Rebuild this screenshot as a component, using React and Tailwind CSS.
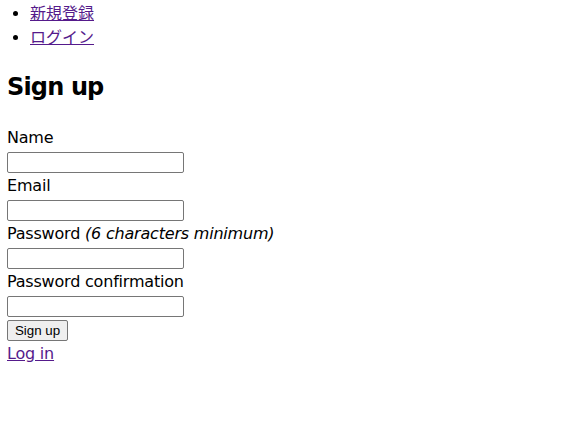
export default function App() {
  const inputCls = "h-[21px] w-[177px] rounded-[2px] border border-[#767676] bg-white";
  return (
    <div className="min-h-[435px] bg-white pl-[7px] pt-[2px] text-[16px] leading-[24px] tracking-[-0.2px] text-black font-['DejaVu_Sans','Noto_Sans_CJK_JP',sans-serif]">
      <ul className="m-0 list-disc pl-[23px] tracking-normal">
        <li><a href="#" className="text-[#551a8b] underline">新規登録</a></li>
        <li><a href="#" className="text-[#551a8b] underline">ログイン</a></li>
      </ul>
      <h2 className="mt-[19px] mb-[21px] text-[24px] leading-[36px] font-bold tracking-[-0.85px]">Sign up</h2>
      <form className="flex flex-col items-start">
        <label>Name</label>
        <div className="h-[24px]"><input className={inputCls} /></div>
        <label>Email</label>
        <div className="h-[24px]"><input className={inputCls} /></div>
        <label>Password <em>(6 characters minimum)</em></label>
        <div className="h-[24px]"><input className={inputCls} /></div>
        <label>Password confirmation</label>
        <div className="h-[24px]"><input className={inputCls} /></div>
        <div className="h-[24px]">
          <button type="button" className="h-[21px] w-[61px] rounded-[2px] border border-[#767676] bg-[#efefef] text-center text-[13.33px] leading-[15px] tracking-normal font-['Liberation_Sans',sans-serif]">Sign up</button>
        </div>
      </form>
      <a href="#" className="text-[#551a8b] underline">Log in</a>
    </div>
  );
}
